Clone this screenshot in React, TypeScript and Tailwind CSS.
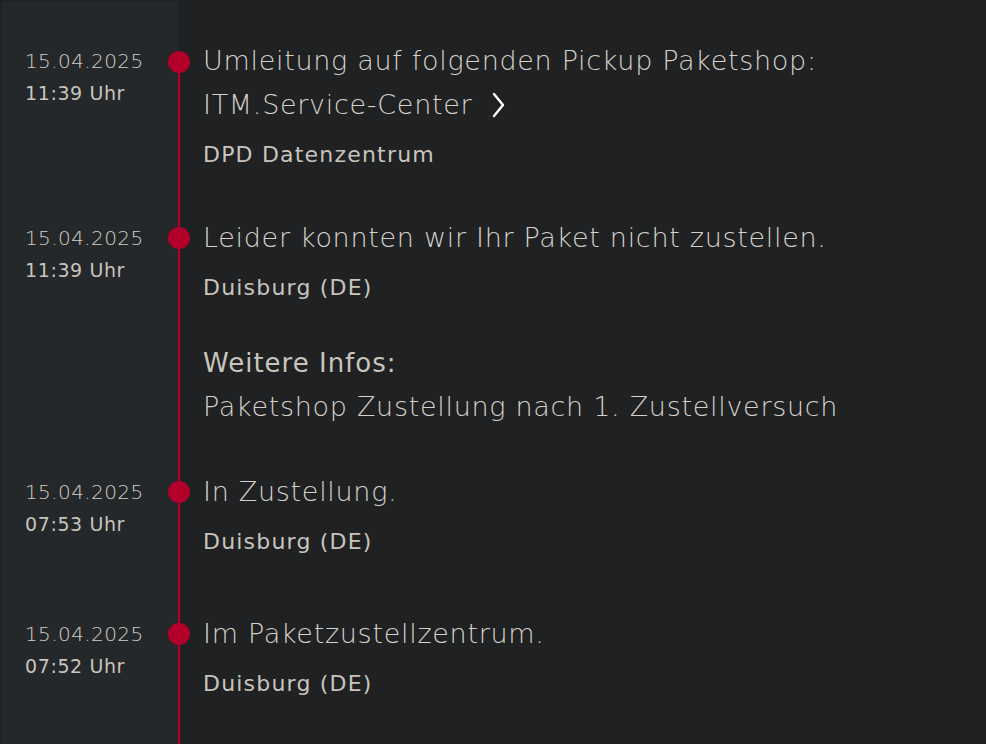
import React from "react";

type Entry = {
  date: string;
  time: string;
  title: React.ReactNode;
  place: string;
  extra?: { label: string; text: string };
  rowClass: string;
  first?: boolean;
};

const Chevron = () => (
  <svg
    width="14"
    height="26"
    viewBox="0 0 14 26"
    fill="none"
    stroke="#ffffff"
    strokeWidth="2.4"
    strokeLinecap="round"
    strokeLinejoin="round"
    className="inline-block ml-5 -mt-1 align-middle"
  >
    <path d="M2 2 L11 13 L2 24" />
  </svg>
);

const entries: Entry[] = [
  {
    date: "15.04.2025",
    time: "11:39 Uhr",
    title: (
      <>
        Umleitung auf folgenden Pickup Paketshop:
        <br />
        ITM.Service-Center
        <Chevron />
      </>
    ),
    place: "DPD Datenzentrum",
    rowClass: "pt-[37px] pb-[46px]",
    first: true,
  },
  {
    date: "15.04.2025",
    time: "11:39 Uhr",
    title: "Leider konnten wir Ihr Paket nicht zustellen.",
    place: "Duisburg (DE)",
    extra: {
      label: "Weitere Infos:",
      text: "Paketshop Zustellung nach 1. Zustellversuch",
    },
    rowClass: "pb-[41px]",
  },
  {
    date: "15.04.2025",
    time: "07:53 Uhr",
    title: "In Zustellung.",
    place: "Duisburg (DE)",
    rowClass: "pb-[55px]",
  },
  {
    date: "15.04.2025",
    time: "07:52 Uhr",
    title: "Im Paketzustellzentrum.",
    place: "Duisburg (DE)",
    rowClass: "pb-[60px]",
  },
];

function Row({ entry }: { entry: Entry }) {
  return (
    <div className="grid grid-cols-[176px_1fr]">
      <div className={`bg-[#25282a] pl-[23px] ${entry.rowClass}`}>
        <p className="text-[20px] leading-[32px] tracking-[0.4px] font-light text-[#d2cdc6] mt-[6px]">{entry.date}</p>
        <p className="text-[19px] leading-[32px] tracking-[0.6px]">{entry.time}</p>
      </div>
      <div className={`relative pl-[25px] ${entry.rowClass}`}>
        <div
          className={`absolute left-0 w-[2px] bg-[#b3002b] bottom-0 ${entry.first ? "top-[60px]" : "top-0"}`}
        />
        <div className={`absolute left-[-10px] w-[22px] h-[22px] rounded-full bg-[#b3002b] ${entry.first ? "top-[49px]" : "top-[11px]"}`} />
        <h3 className="text-[27px] leading-[44px] tracking-[0.7px] font-light text-[#d6d1ca]">{entry.title}</h3>
        <p className="mt-[13px] text-[22px] leading-[30px] tracking-[1.2px]">{entry.place}</p>
        {entry.extra && (
          <div className="mt-[38px]">
            <p className="text-[26px] leading-[44px] tracking-[1px]">{entry.extra.label}</p>
            <p className="text-[27px] leading-[44px] tracking-[0.7px] font-light text-[#d6d1ca]">{entry.extra.text}</p>
          </div>
        )}
      </div>
    </div>
  );
}

export default function App() {
  return (
    <div className="min-h-screen bg-[#1f2123] pt-[2px] pl-[2px] text-[#c9c4bd] font-['DejaVu_Sans',sans-serif] overflow-hidden">
      {entries.map((e, i) => (
        <Row key={i} entry={e} />
      ))}
    </div>
  );
}
